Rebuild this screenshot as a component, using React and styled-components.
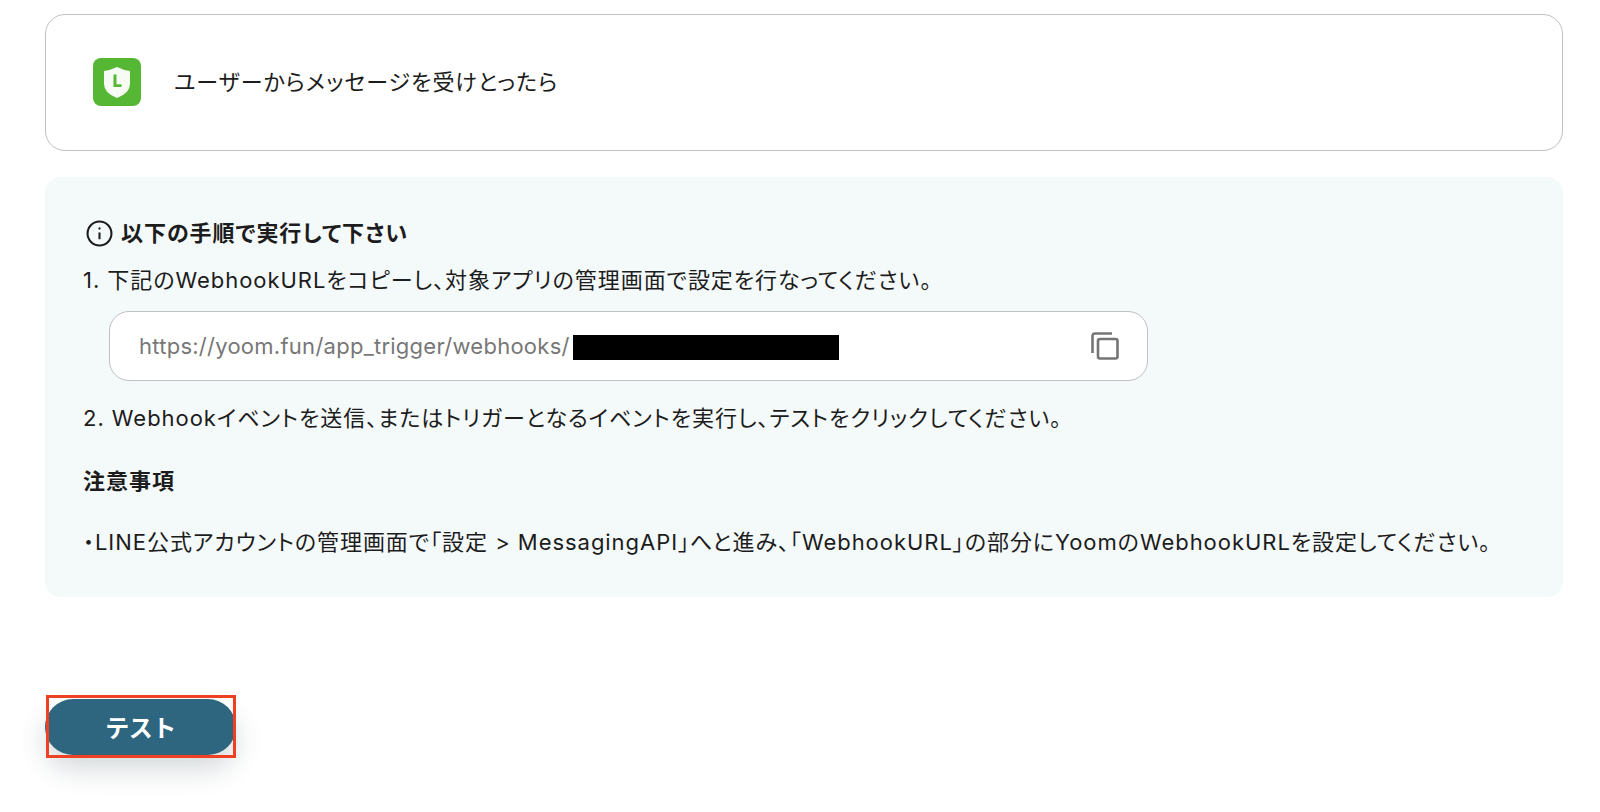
import React from "react";
import styled, { createGlobalStyle } from "styled-components";

const Global = createGlobalStyle`
  html, body { margin: 0; padding: 0; background: #fff; }
  body {
    font-family: Inter, "Noto Sans CJK JP", sans-serif;
    font-feature-settings: "palt";
    color: #1c1c1c;
  }
`;

const Page = styled.div`
  width: 1600px;
  height: 812px;
  box-sizing: border-box;
  padding: 14px 37px 0 45px;
  overflow: hidden;
`;

const TriggerCard = styled.div`
  height: 137px;
  box-sizing: border-box;
  border: 1px solid #bfc0c1;
  border-radius: 20px;
  display: flex;
  align-items: center;
  padding: 0 0 2px 47px;
  gap: 33px;
  font-size: 22px;
  letter-spacing: 1px;
`;

const TriggerLabel = styled.span`
  margin-bottom: 4px;
`;

const Panel = styled.div`
  margin-top: 26px;
  height: 420px;
  box-sizing: border-box;
  background: #f4f9fa;
  border-radius: 16px;
  padding: 41px 38px 0 38px;
  font-size: 22px;
  letter-spacing: 0.96px;
  line-height: 30px;
`;

const Heading = styled.div`
  display: flex;
  align-items: center;
  gap: 8px;
  font-weight: 700;
  margin-left: 3px;
`;

const Step = styled.div`
  margin-top: ${(p) => p.$top}px;
  white-space: nowrap;
`;

const Note = styled.div`
  margin-top: 33px;
  font-weight: 700;
`;

const UrlBox = styled.div`
  width: 1039px;
  height: 70px;
  box-sizing: border-box;
  margin: 16px 0 0 26px;
  background: #fff;
  border: 1px solid #bfc0c1;
  border-radius: 20px;
  display: flex;
  align-items: center;
  justify-content: space-between;
  padding: 0 28px 0 29px;
`;

const UrlField = styled.div`
  display: flex;
  align-items: center;
  font-size: 22px;
  letter-spacing: 0.26px;
  color: #777;
`;

const Redacted = styled.span`
  display: block;
  width: 266px;
  height: 25px;
  margin: 3px 0 0 3px;
  background: #000;
`;

const Footer = styled.div`
  position: relative;
  width: 191px;
  height: 56px;
  margin-top: 102px;
`;

const TestButton = styled.button`
  width: 100%;
  height: 100%;
  border: 0;
  border-radius: 28px;
  background: #2e6680;
  color: #fff;
  font-family: inherit;
  font-size: 24px;
  font-weight: 700;
  letter-spacing: -0.5px;
  padding: 0 0 1px;
  box-shadow: 0 14px 28px rgba(40, 60, 70, 0.2);
`;

const Highlight = styled.div`
  position: absolute;
  left: 1px;
  top: -4px;
  width: 190px;
  height: 63px;
  box-sizing: border-box;
  border: 3px solid #ee4022;
`;

function LineIcon() {
  return (
    <svg width="48" height="48" viewBox="0 0 48 48">
      <rect width="48" height="48" rx="8" fill="#55b734" />
      <path d="M11 13 Q18 12 24 9 Q30 12 37 13 V26 Q37 35 24 40 Q11 35 11 26 Z" fill="#fff" opacity="0.95" />
      <path d="M20.5 16.5 h3 v9.8 h5 v2.7 h-8 Z" fill="#55b734" />
    </svg>
  );
}

function InfoIcon() {
  return (
    <svg width="27" height="27" viewBox="0 0 26 26" fill="none" stroke="#1c1c1c">
      <circle cx="13" cy="13" r="11.5" strokeWidth="2" />
      <path d="M13 12 v6.5" strokeWidth="2" />
      <circle cx="13" cy="8.2" r="1.1" fill="#1c1c1c" stroke="none" />
    </svg>
  );
}

function CopyIcon() {
  return (
    <svg width="28" height="28" viewBox="0 0 28 28" fill="none" stroke="#757575" strokeWidth="2.6">
      <path d="M21 1.5 H4 Q1.5 1.5 1.5 4 V21" />
      <rect x="7" y="7" width="19.5" height="19.5" rx="2" />
    </svg>
  );
}

export default function App() {
  return (
    <Page>
      <Global />
      <TriggerCard>
        <LineIcon />
        <TriggerLabel>ユーザーからメッセージを受けとったら</TriggerLabel>
      </TriggerCard>
      <Panel>
        <Heading>
          <InfoIcon />
          以下の手順で実行して下さい
        </Heading>
        <Step $top={17}>1. 下記のWebhookURLをコピーし、対象アプリの管理画面で設定を行なってください。</Step>
        <UrlBox>
          <UrlField>
            https://yoom.fun/app_trigger/webhooks/
            <Redacted />
          </UrlField>
          <CopyIcon />
        </UrlBox>
        <Step $top={22}>2. Webhookイベントを送信、またはトリガーとなるイベントを実行し、テストをクリックしてください。</Step>
        <Note>注意事項</Note>
        <Step $top={31}>・LINE公式アカウントの管理画面で「設定 &gt; MessagingAPI」へと進み、「WebhookURL」の部分にYoomのWebhookURLを設定してください。</Step>
      </Panel>
      <Footer>
        <TestButton>テスト</TestButton>
        <Highlight />
      </Footer>
    </Page>
  );
}
